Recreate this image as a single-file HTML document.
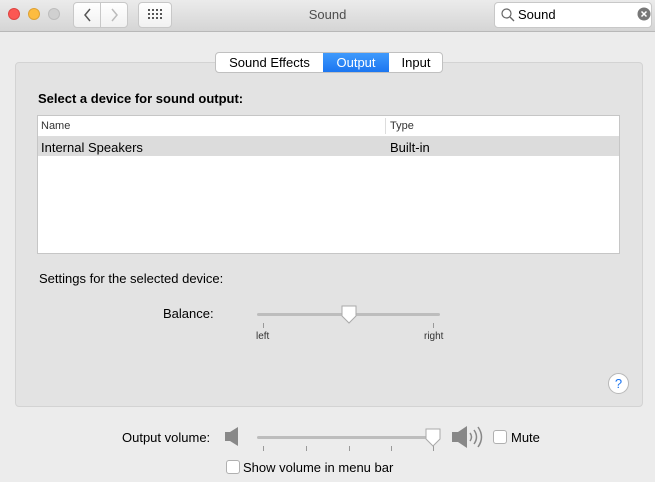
<!DOCTYPE html><html><head><meta charset="utf-8"><style>
*{box-sizing:border-box;margin:0;padding:0}
body{width:655px;height:482px;background:#ececec;font-family:"Liberation Sans",sans-serif;font-size:13px;color:#000;position:relative;overflow:hidden}
.a{position:absolute}
.tb{left:0;top:0;width:655px;height:32px;background:linear-gradient(#ebebeb,#d5d5d5);border-bottom:1px solid #b8b8b8}
.dot{width:12px;height:12px;border-radius:50%;top:8px}
.btn{background:linear-gradient(#fff,#f1f1f1);border:1px solid #c8c8c8;border-radius:4px}
.cb{width:14px;height:14px;background:#fff;border:1px solid #b0b0b0;border-radius:3px}
.tick{width:1px;height:5px;background:#999}
</style></head><body>
<div class="a tb"></div>
<div class="a dot" style="left:8px;background:#fc5753;border:1px solid #de4542"></div>
<div class="a dot" style="left:28px;background:#fdbc40;border:1px solid #dea236"></div>
<div class="a dot" style="left:48px;background:#d0d0d0;border:1px solid #bdbdbd"></div>
<div class="a btn" style="left:73px;top:2px;width:28px;height:26px;border-radius:4px 0 0 4px"></div>
<div class="a btn" style="left:100px;top:2px;width:28px;height:26px;border-radius:0 4px 4px 0"></div>
<svg class="a" style="left:73px;top:2px" width="56" height="26"><path d="M17 7l-5 6 5 6" fill="none" stroke="#555" stroke-width="1.5"/><path d="M39 7l5 6-5 6" fill="none" stroke="#bbb" stroke-width="1.5"/></svg>
<div class="a btn" style="left:138px;top:2px;width:34px;height:26px"></div>
<svg class="a" style="left:148px;top:9px" width="14" height="12" fill="#555"><rect x="0" y="0" width="2" height="2"/><rect x="4" y="0" width="2" height="2"/><rect x="8" y="0" width="2" height="2"/><rect x="12" y="0" width="2" height="2"/><rect x="0" y="4" width="2" height="2"/><rect x="4" y="4" width="2" height="2"/><rect x="8" y="4" width="2" height="2"/><rect x="12" y="4" width="2" height="2"/><rect x="0" y="8" width="2" height="2"/><rect x="4" y="8" width="2" height="2"/><rect x="8" y="8" width="2" height="2"/><rect x="12" y="8" width="2" height="2"/></svg>
<div class="a" style="left:0;width:655px;top:7px;text-align:center;color:#4d4d4d;font-size:13px">Sound</div>
<div class="a" style="left:494px;top:2px;width:158px;height:26px;background:#fff;border:1px solid #c8c8c8;border-radius:4px"></div>
<svg class="a" style="left:500px;top:7px" width="16" height="16"><circle cx="6.5" cy="6.5" r="4.5" fill="none" stroke="#666" stroke-width="1.2"/><path d="M10 10l4 4" stroke="#666" stroke-width="1.3"/></svg>
<div class="a" style="left:518px;top:7px">Sound</div>
<svg class="a" style="left:637px;top:7px" width="14" height="14"><circle cx="7" cy="7" r="6.5" fill="#777"/><path d="M4.5 4.5l5 5M9.5 4.5l-5 5" stroke="#fff" stroke-width="1.5"/></svg>

<div class="a" style="left:15px;top:62px;width:628px;height:345px;background:#e3e3e3;border:1px solid #d3d3d3;border-radius:4px"></div>
<div class="a" style="left:215px;top:52px;width:228px;height:21px;background:#fff;border:1px solid #c0c0c0;border-radius:4px;overflow:hidden">
<div class="a" style="left:0;top:2px;width:107px;text-align:center">Sound Effects</div>
<div class="a" style="left:107px;top:0;width:66px;height:20px;background:linear-gradient(#3f9afc,#1a74f0);color:#fff;text-align:center;padding-top:2px">Output</div>
<div class="a" style="left:173px;top:2px;width:54px;text-align:center">Input</div>
</div>
<div class="a" style="left:38px;top:91px;font-weight:bold">Select a device for sound output:</div>
<div class="a" style="left:37px;top:115px;width:583px;height:139px;background:#fff;border:1px solid #c6c6c6"></div>
<div class="a" style="left:38px;top:136px;width:581px;height:1px;background:#ddd"></div>
<div class="a" style="left:385px;top:118px;width:1px;height:16px;background:#ddd"></div>
<div class="a" style="left:41px;top:120px;font-size:11px;color:#333">Name</div>
<div class="a" style="left:390px;top:120px;font-size:11px;color:#333">Type</div>
<div class="a" style="left:38px;top:137px;width:581px;height:19px;background:#dcdcdc"></div>
<div class="a" style="left:41px;top:140px">Internal Speakers</div>
<div class="a" style="left:390px;top:140px">Built-in</div>
<div class="a" style="left:39px;top:271px">Settings for the selected device:</div>
<div class="a" style="left:163px;top:306px">Balance:</div>
<div class="a" style="left:257px;top:313px;width:183px;height:3px;background:#bdbdbd;border-radius:2px"></div>
<div class="a tick" style="left:263px;top:323px"></div><div class="a tick" style="left:433px;top:323px"></div>
<svg class="a" style="left:340px;top:305px" width="18" height="20"><path d="M2 1h14v10l-7 7-7-7z" fill="#fff" stroke="#aaa"/></svg>
<div class="a" style="left:256px;top:331px;font-size:10px;color:#333">left</div>
<div class="a" style="left:424px;top:331px;font-size:10px;color:#333">right</div>
<div class="a" style="left:608px;top:373px;width:21px;height:21px;border-radius:50%;background:#fff;border:1px solid #b8b8b8;text-align:center;color:#1a74f0;font-size:13px;line-height:19px">?</div>

<div class="a" style="left:122px;top:430px">Output volume:</div>
<svg class="a" style="left:225px;top:427px" width="14" height="19" fill="#888"><rect x="0" y="5" width="5" height="9"/><path d="M5 5l8-5v19l-8-5z"/></svg>
<div class="a" style="left:257px;top:436px;width:176px;height:3px;background:#bdbdbd;border-radius:2px"></div>
<div class="a tick" style="left:263px;top:446px"></div><div class="a tick" style="left:306px;top:446px"></div><div class="a tick" style="left:349px;top:446px"></div><div class="a tick" style="left:391px;top:446px"></div><div class="a tick" style="left:433px;top:446px"></div>
<svg class="a" style="left:424px;top:428px" width="18" height="20"><path d="M2 1h14v10l-7 7-7-7z" fill="#fff" stroke="#aaa"/></svg>
<svg class="a" style="left:452px;top:425px" width="34" height="24" fill="none" stroke="#888" stroke-width="1.5"><rect x="0" y="7" width="6" height="10" fill="#888" stroke="none"/><path d="M6 7l9-6v22l-9-6z" fill="#888" stroke="none"/><path d="M18 8q3 4 0 8M22 5q5 7 0 14M26 2q7 10 0 20"/></svg>
<div class="a cb" style="left:493px;top:430px"></div>
<div class="a" style="left:511px;top:430px">Mute</div>
<div class="a cb" style="left:226px;top:460px"></div>
<div class="a" style="left:243px;top:460px">Show volume in menu bar</div>
</body></html>
